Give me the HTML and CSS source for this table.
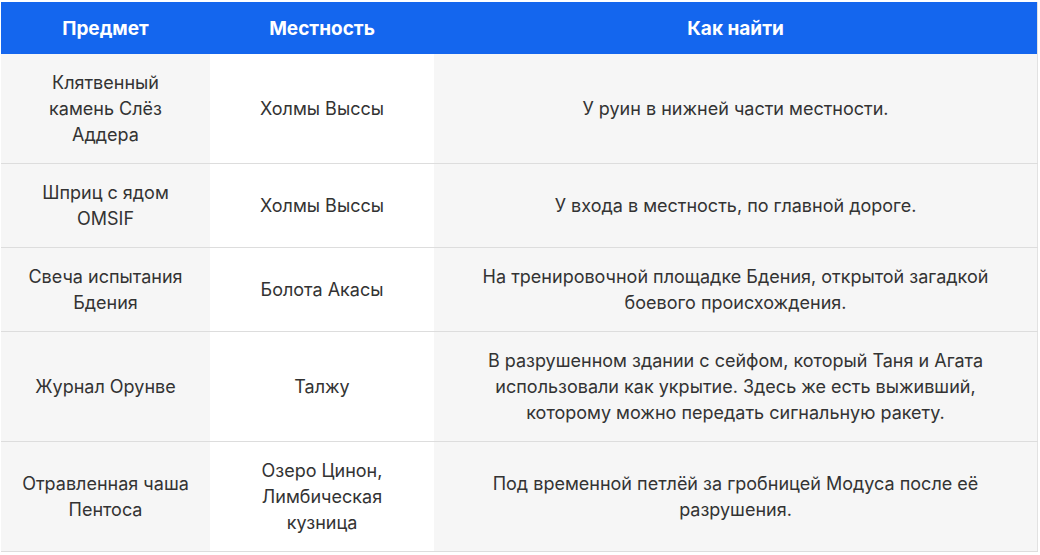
FILE: index.html
```html
<!DOCTYPE html>
<html lang="ru">
<head>
<meta charset="utf-8">
<link rel="stylesheet" href="styles.css">
</head>
<body>
<table class="items">
  <colgroup>
    <col class="c1">
    <col class="c2">
    <col class="c3">
  </colgroup>
  <thead>
    <tr><th>Предмет</th><th>Местность</th><th>Как найти</th></tr>
  </thead>
  <tbody>
    <tr><td>Клятвенный камень Слёз Аддера</td><td>Холмы Выссы</td><td>У руин в нижней части местности.</td></tr>
    <tr><td>Шприц с ядом OMSIF</td><td>Холмы Выссы</td><td>У входа в местность, по главной дороге.</td></tr>
    <tr><td>Свеча испытания Бдения</td><td>Болота Акасы</td><td>На тренировочной площадке Бдения, открытой загадкой боевого происхождения.</td></tr>
    <tr><td>Журнал Орунве</td><td>Талжу</td><td>В разрушенном здании с сейфом, который Таня и Агата использовали как укрытие. Здесь же есть выживший, которому можно передать сигнальную ракету.</td></tr>
    <tr><td>Отравленная чаша Пентоса</td><td>Озеро Цинон, Лимбическая кузница</td><td>Под временной петлёй за гробницей Модуса после её разрушения.</td></tr>
  </tbody>
</table>
</body>
</html>
```
FILE: styles.css
```css
html, body {
  margin: 0;
  padding: 0;
  background: #ffffff;
}
body {
  padding: 2px 0 0 1px;
  font-family: Inter, "Noto Sans", sans-serif;
}
.items {
  width: 1037px;
  border-collapse: collapse;
  table-layout: fixed;
  border-right: 1px solid #e2e2e2;
}
.c1 { width: 209px; }
.c2 { width: 224px; }
.c3 { width: auto; }
.items th {
  background: #1466ee;
  color: #ffffff;
  font-weight: 700;
  font-size: 19px;
  line-height: 26px;
  padding: 14px 16px 12px;
  text-align: center;
}
.items td {
  color: #333333;
  font-size: 18px;
  line-height: 26px;
  padding: 16px 24px 15px;
  text-align: center;
  vertical-align: middle;
  border-bottom: 1px solid #dddddd;
}
.items td:nth-child(1) {
  padding-left: 18px;
  padding-right: 18px;
}
.items td:nth-child(1),
.items td:nth-child(3) {
  background: #f6f6f6;
}
.items td:nth-child(2) {
  background: #ffffff;
}
```
